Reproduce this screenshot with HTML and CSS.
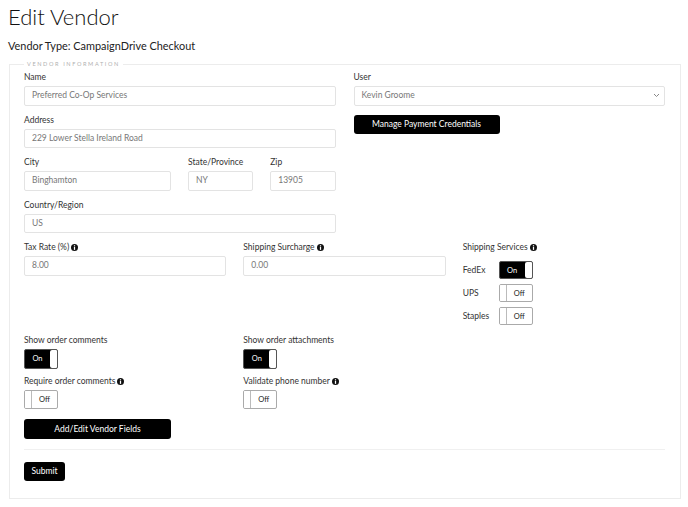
FILE: index.html
```html
<!DOCTYPE html>
<html>
<head>
<meta charset="utf-8">
<link rel="stylesheet" href="styles.css">
</head>
<body>
<div class="page">
  <h1 class="title">Edit Vendor</h1>
  <div class="vendor-type">Vendor Type: CampaignDrive Checkout</div>
  <fieldset class="panel">
    <legend class="legend">VENDOR INFORMATION</legend>

    <div class="cols-2">
      <div class="col">
        <div class="group">
          <label class="lbl">Name</label>
          <div class="input">Preferred Co-Op Services</div>
        </div>
        <div class="group">
          <label class="lbl">Address</label>
          <div class="input">229 Lower Stella Ireland Road</div>
        </div>
        <div class="city-row">
          <div class="group">
            <label class="lbl">City</label>
            <div class="input">Binghamton</div>
          </div>
          <div class="group">
            <label class="lbl">State/Province</label>
            <div class="input">NY</div>
          </div>
          <div class="group">
            <label class="lbl">Zip</label>
            <div class="input">13905</div>
          </div>
        </div>
        <div class="group">
          <label class="lbl">Country/Region</label>
          <div class="input">US</div>
        </div>
      </div>
      <div class="col">
        <div class="group">
          <label class="lbl">User</label>
          <div class="input select">Kevin Groome
            <svg class="chev" width="7" height="5" viewBox="0 0 7 5"><path d="M1 1 L3.5 3.5 L6 1" fill="none" stroke="#888" stroke-width="1"/></svg>
          </div>
        </div>
        <button class="btn btn-wide">Manage Payment Credentials</button>
      </div>
    </div>

    <div class="cols-3">
      <div class="group">
        <label class="lbl">Tax Rate (%) <svg class="info" width="7" height="7" viewBox="0 0 8 8"><circle cx="4" cy="4" r="4" fill="#111"/><rect x="3.3" y="1.4" width="1.4" height="1.3" fill="#fff"/><rect x="3.3" y="3.3" width="1.4" height="3.4" fill="#fff"/></svg></label>
        <div class="input">8.00</div>
      </div>
      <div class="group">
        <label class="lbl">Shipping Surcharge <svg class="info" width="7" height="7" viewBox="0 0 8 8"><circle cx="4" cy="4" r="4" fill="#111"/><rect x="3.3" y="1.4" width="1.4" height="1.3" fill="#fff"/><rect x="3.3" y="3.3" width="1.4" height="3.4" fill="#fff"/></svg></label>
        <div class="input">0.00</div>
      </div>
      <div class="group group-ship">
        <label class="lbl">Shipping Services <svg class="info" width="7" height="7" viewBox="0 0 8 8"><circle cx="4" cy="4" r="4" fill="#111"/><rect x="3.3" y="1.4" width="1.4" height="1.3" fill="#fff"/><rect x="3.3" y="3.3" width="1.4" height="3.4" fill="#fff"/></svg></label>
        <div class="ship-list">
          <div class="ship-row"><span class="ship-name">FedEx</span><span class="toggle toggle-sm on"><span class="t-text">On</span><span class="knob"></span></span></div>
          <div class="ship-row"><span class="ship-name">UPS</span><span class="toggle toggle-sm off"><span class="knob"></span><span class="t-text">Off</span></span></div>
          <div class="ship-row"><span class="ship-name">Staples</span><span class="toggle toggle-sm off"><span class="knob"></span><span class="t-text">Off</span></span></div>
        </div>
      </div>
    </div>

    <div class="cols-3">
      <div class="group group-tg">
        <label class="lbl">Show order comments</label>
        <span class="toggle on"><span class="t-text">On</span><span class="knob"></span></span>
      </div>
      <div class="group group-tg">
        <label class="lbl">Show order attachments</label>
        <span class="toggle on"><span class="t-text">On</span><span class="knob"></span></span>
      </div>
    </div>

    <div class="cols-3">
      <div class="group group-tg">
        <label class="lbl">Require order comments <svg class="info" width="7" height="7" viewBox="0 0 8 8"><circle cx="4" cy="4" r="4" fill="#111"/><rect x="3.3" y="1.4" width="1.4" height="1.3" fill="#fff"/><rect x="3.3" y="3.3" width="1.4" height="3.4" fill="#fff"/></svg></label>
        <span class="toggle off"><span class="knob"></span><span class="t-text">Off</span></span>
      </div>
      <div class="group group-tg">
        <label class="lbl">Validate phone number <svg class="info" width="7" height="7" viewBox="0 0 8 8"><circle cx="4" cy="4" r="4" fill="#111"/><rect x="3.3" y="1.4" width="1.4" height="1.3" fill="#fff"/><rect x="3.3" y="3.3" width="1.4" height="3.4" fill="#fff"/></svg></label>
        <span class="toggle off"><span class="knob"></span><span class="t-text">Off</span></span>
      </div>
    </div>

    <button class="btn btn-fields">Add/Edit Vendor Fields</button>
    <hr class="divider">
    <button class="btn btn-submit">Submit</button>
  </fieldset>
</div>
</body>
</html>
```

FILE: styles.css
```css
* { box-sizing: border-box; }
html, body { margin: 0; padding: 0; background: #fff; }
body { font-family: Lato, "Open Sans", sans-serif; color: #333; }

.page { padding: 0 7px 0 8px; }

.title {
  font-size: 22px;
  font-weight: 300;
  color: #111;
  margin: 0;
  padding-top: 4px;
  line-height: 26px;
}

.vendor-type {
  font-size: 10.9px;
  color: #222;
  margin-top: 9px;
  line-height: 14px;
}

.panel {
  margin: 7px 0 0 1px;
  border: 1px solid #ececec;
  padding: 4px 15px 17px 14px;
  min-width: 0;
}

.legend {
  font-size: 5.6px;
  letter-spacing: 1.6px;
  color: #b0b0b0;
  padding: 0 3px;
  margin-left: 0;
  line-height: 8px;
}

.group { margin-bottom: 9px; display: flex; flex-direction: column; align-items: flex-start; }
.group-tg { margin-bottom: 7px; }

.lbl {
  display: flex;
  align-items: center;
  gap: 2px;
  font-size: 8.5px;
  line-height: 11px;
  margin-bottom: 3px;
  color: #333;
}

.info { display: block; }

.input {
  align-self: stretch;
  height: 19.5px;
  border: 1px solid #e3e3e3;
  border-radius: 2px;
  padding: 0 7px;
  font-size: 8.5px;
  line-height: 17px;
  color: #777;
  display: flex;
  align-items: center;
}

.select { justify-content: space-between; padding-right: 4px; }

.cols-2 {
  display: grid;
  grid-template-columns: 1fr 1fr;
  column-gap: 18px;
}

.city-row {
  display: grid;
  grid-template-columns: 147px 1fr 1fr;
  column-gap: 17px;
}

.cols-3 {
  display: grid;
  grid-template-columns: 1fr 1fr 1fr;
  column-gap: 17px;
}

.btn {
  display: block;
  background: #000;
  color: #fff;
  border: none;
  border-radius: 3px;
  font-family: Lato, "Open Sans", sans-serif;
  font-size: 8.5px;
  height: 19.5px;
  padding: 0;
  text-align: center;
}

.btn-wide { width: 146px; margin-top: 0; }
.btn-fields { width: 147px; margin-top: 3px; }
.btn-submit { width: 41px; }

.divider {
  border: none;
  border-top: 1px solid #f0f0f0;
  margin: 10px 0 12px;
}

.group-ship { margin-bottom: 10px; }
.ship-list { display: flex; flex-direction: column; gap: 5px; margin-top: 5px; }
.ship-row { display: flex; align-items: center; }
.ship-name { width: 36px; font-size: 8.5px; color: #333; }

.toggle {
  display: flex;
  width: 34px;
  height: 19.5px;
  border: 1px solid #aaa;
  border-radius: 2px;
  overflow: hidden;
  font-size: 7.5px;
}
.toggle-sm { height: 18px; }

.toggle .t-text {
  flex: 1;
  display: flex;
  align-items: center;
  justify-content: center;
}
.toggle .knob {
  width: 7px;
  background: #fff;
}
.toggle.on { background: #000; color: #fff; border-color: #555; }
.toggle.on .knob { border-radius: 2px 0 0 2px; }
.toggle.off { background: #fff; color: #222; }
.toggle.off .knob { border-right: 1px solid #bbb; }
```
